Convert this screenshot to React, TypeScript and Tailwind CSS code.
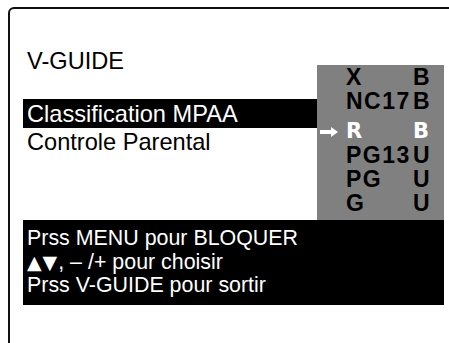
const ratings = [
  { code: 'X', state: 'B' },
  { code: 'NC17', state: 'B' },
];
const lower = [
  { code: 'PG13', state: 'U' },
  { code: 'PG', state: 'U' },
  { code: 'G', state: 'U' },
];

const ArrowIcon = () => (
  <svg width="18" height="10" viewBox="0 0 18 10" className="block">
    <path d="M0 3h11V0l7 5-7 5V7H0z" fill="#fff" />
  </svg>
);

const RatingRow = ({ code, state }: { code: string; state: string }) => (
  <div className="flex h-[24px] leading-[24px]">
    <span className="w-[29px]" />
    <span className="w-[67px] tracking-[1.5px]">{code}</span>
    <span>{state}</span>
  </div>
);

export default function App() {
  return (
    <div
      className="w-[449px] h-[343px] overflow-hidden bg-white pl-[8px] pt-[7px]"
      style={{ fontFamily: '"Liberation Sans", Arial, sans-serif' }}
    >
      <div className="w-[480px] h-[380px] border-2 border-[#111] rounded-[6px] pl-[13px] pt-[38px]">
        {/* top area: menu + rating list */}
        <div className="flex w-[421px] h-[173px]">
          <div className="w-[294px] text-[23.6px] text-black">
            <div className="h-[28px] leading-[28px] pl-[4px]">V-GUIDE</div>
            <div className="mt-[24px] h-[29px] leading-[29px] pt-px bg-black text-white pl-[4px]">
              Classification MPAA
            </div>
            <div className="h-[28px] leading-[28px] pl-[4px]">Controle Parental</div>
          </div>
          <div className="mt-[18px] w-[127px] h-[155px] bg-[#808080] text-[23px] font-bold text-black">
            {ratings.map((r) => (
              <RatingRow key={r.code} {...r} />
            ))}
            <div
              className="flex items-center h-[23px] mt-[7px] text-white text-[21px]"
              style={{ fontFamily: '"DejaVu Sans", sans-serif' }}
            >
              <span className="w-[29px] pl-[3px]">
                <ArrowIcon />
              </span>
              <span className="w-[67px] leading-[23px]">R</span>
              <span className="leading-[23px]">B</span>
            </div>
            {lower.map((r) => (
              <RatingRow key={r.code} {...r} />
            ))}
          </div>
        </div>
        {/* help box */}
        <div className="w-[421px] h-[85px] bg-black text-white text-[21.4px] leading-[23.5px] pl-[4px] pt-[7px]">
          <div>Prss MENU pour BLOQUER</div>
          <div>
            <span
              className="text-[19px] tracking-[1px] leading-none"
              style={{ fontFamily: '"DejaVu Sans", sans-serif' }}
            >
              ▲▼
            </span>
            , – /+ pour choisir
          </div>
          <div>Prss V-GUIDE pour sortir</div>
        </div>
      </div>
    </div>
  );
}
